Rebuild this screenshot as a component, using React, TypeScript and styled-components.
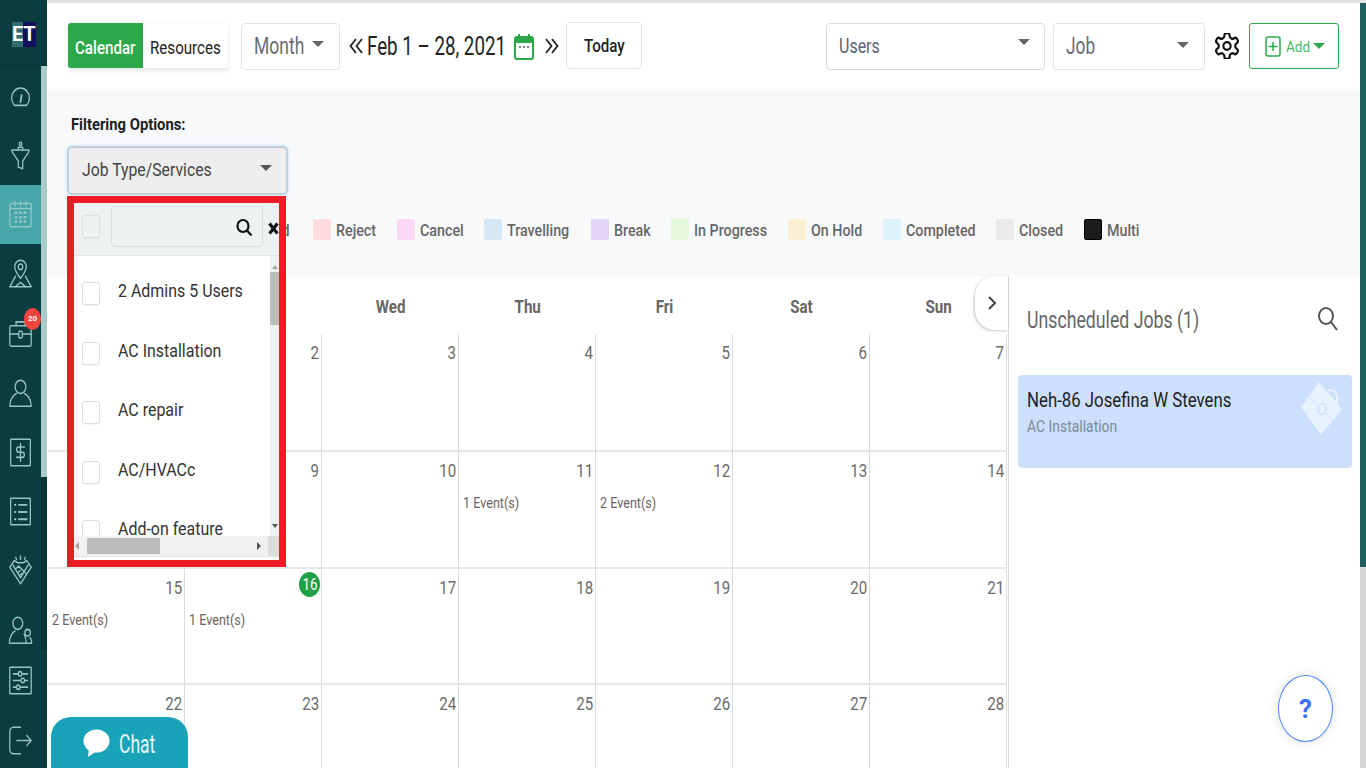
import React from "react";
import styled, { createGlobalStyle } from "styled-components";

const Global = createGlobalStyle`
  html, body { margin: 0; height: 100%; overflow: hidden; background: #fff; }
  * { box-sizing: border-box; }
  body { font-family: Roboto, "Liberation Sans", sans-serif; color: #333; }
`;

/* The reference's type is tall and narrow: every text run is squeezed horizontally. */
const Squeezed = styled.span<{ $w?: number; $s?: number; $c?: string; $b?: number; $x?: number; $o?: string }>`
  display: inline-block;
  width: ${(p) => (p.$w ? `${p.$w}px` : "auto")};
  white-space: nowrap;
  transform: scaleX(${(p) => p.$x ?? 0.84});
  transform-origin: ${(p) => p.$o ?? "left"} center;
  font-size: ${(p) => p.$s ?? 16}px;
  color: ${(p) => p.$c ?? "inherit"};
  font-weight: ${(p) => p.$b ?? 400};
`;

const Shell = styled.div`
  display: flex;
  width: 1366px;
  height: 768px;
  position: relative;
  overflow: hidden;
`;

const Sidebar = styled.aside`
  width: 47px;
  flex: none;
  background: #0b3c40;
  display: flex;
  flex-direction: column;
`;
const LogoBar = styled.div`
  height: 66px;
  flex: none;
  display: flex;
  align-items: center;
  justify-content: center;
  padding-right: 1px;
  border-bottom: 1px solid #083235;
`;
const Logo = styled.div`
  display: flex;
  height: 25px;
  width: 22px;
  margin-top: 3px;
`;
const LogoE = styled.span<{ $bg: string }>`
  flex: 1;
  background: ${(p) => p.$bg};
  color: #fff;
  font-size: 20px;
  font-weight: 700;
  line-height: 25px;
  text-align: center;
  transform-origin: center;
`;
const SideBody = styled.div`
  flex: 1;
  display: flex;
  min-height: 0;
`;
const NavCol = styled.nav`
  width: 41px;
  flex: none;
  display: flex;
  flex-direction: column;
  padding-top: 1px;
`;
const NavItem = styled.div<{ $active?: boolean; $h?: number }>`
  height: ${(p) => p.$h ?? 59}px;
  flex: none;
  display: flex;
  align-items: center;
  justify-content: center;
  color: #93c6c3;
  background: ${(p) => (p.$active ? "#45a5a8" : "transparent")};
  position: relative;
`;
const Badge = styled.span`
  position: absolute;
  top: 5px;
  right: 0;
  width: 17px;
  height: 22px;
  border-radius: 50%;
  background: #f2443a;
  color: #fff;
  font-size: 8px;
  font-weight: 700;
  line-height: 22px;
  text-align: center;
`;
const SideTrack = styled.div`
  width: 6px;
  flex: none;
  display: flex;
  flex-direction: column;
  background: #093437;
`;
const SideThumb = styled.div`
  height: 411px;
  background: #abcaca;
`;
const SideTrackEnd = styled.div`
  flex: 1;
  margin-top: 173px;
  background: #0b3c40;
`;

const RightArea = styled.div`
  flex: 1;
  min-width: 0;
  display: flex;
  border-top: 3px solid #e3e3e6;
`;
const Main = styled.main`
  flex: 1;
  min-width: 0;
  display: flex;
  flex-direction: column;
  position: relative;
`;
const PageTrack = styled.div`
  width: 6px;
  flex: none;
  background: #d6d6d6;
`;
const PageThumb = styled.div`
  height: 564px;
  background: #1f5f60;
`;

const Topbar = styled.header`
  height: 86px;
  flex: none;
  display: flex;
  align-items: center;
  padding: 0 21px;
`;
const Tabs = styled.div`
  display: flex;
  height: 45px;
  margin-top: -1px;
  border-radius: 3px;
  box-shadow: 0 2px 5px rgba(0, 0, 0, 0.12);
`;
const Tab = styled.div<{ $on?: boolean }>`
  display: flex;
  align-items: center;
  width: ${(p) => (p.$on ? 75 : 85)}px;
  padding: 3px 0 0 ${(p) => (p.$on ? 7 : 7)}px;
  background: ${(p) => (p.$on ? "#2aa84a" : "#fff")};
  color: ${(p) => (p.$on ? "#fff" : "#222")};
  border-radius: ${(p) => (p.$on ? "3px 0 0 3px" : "0 3px 3px 0")};
`;
const SelectBox = styled.div<{ $w: number; $ml: number; $blue?: boolean; $pad?: number }>`
  width: ${(p) => p.$w}px;
  height: 47px;
  margin-left: ${(p) => p.$ml}px;
  flex: none;
  display: flex;
  align-items: center;
  justify-content: space-between;
  padding: 0 ${(p) => p.$pad ?? 15}px 0 12px;
  background: #fff;
  border: 1px solid ${(p) => (p.$blue ? "#d9dbe2" : "#e4e4e4")};
  border-radius: 4px;
`;
const Caret = styled.i<{ $c?: string; $up?: number; $w?: number }>`
  display: block;
  width: 0;
  height: 0;
  border-left: ${(p) => p.$w ?? 6}px solid transparent;
  border-right: ${(p) => p.$w ?? 6}px solid transparent;
  border-top: ${(p) => p.$w ?? 6}px solid ${(p) => p.$c ?? "#666"};
  margin-top: ${(p) => -(p.$up ?? 0)}px;
`;
const DateNav = styled.div`
  display: flex;
  align-items: center;
  margin-left: 9px;
  color: #222;
  height: 47px;
`;
const Arrows = styled.span<{ $ml?: number }>`
  display: flex;
  margin-left: ${(p) => p.$ml ?? 0}px;
  color: #222;
`;
const DateText = styled.span`
  margin-left: 4px;
  width: 147px;
`;
const TodayBtn = styled.div`
  margin-left: 7px;
  width: 76px;
  height: 47px;
  margin-top: -2px;
  display: flex;
  align-items: center;
  padding-left: 17px;
  border: 1px solid #e4e4e4;
  border-radius: 4px;
  background: #fff;
`;
const Spacer = styled.div`
  flex: 1;
`;
const GearWrap = styled.span`
  display: flex;
  margin-left: 10px;
  color: #111;
`;
const AddBtn = styled.div`
  width: 90px;
  height: 46px;
  margin-left: 10px;
  display: flex;
  align-items: center;
  padding-left: 15px;
  gap: 5px;
  border: 1px solid #2aa84a;
  border-radius: 3px;
  color: #2aa84a;
`;
const AddLabel = styled.span`
  width: 22px;
`;

const FilterPanel = styled.section`
  height: 187px;
  flex: none;
  background: #f8f9fb;
  padding: 25px 0 0 21px;
  position: relative;
`;
const FilterTitle = styled.div`
  padding-left: 3px;
  height: 20px;
  line-height: 20px;
`;
const FilterSelectWrap = styled.div`
  position: relative;
  width: 219px;
  margin-top: 13px;
`;
const FilterSelect = styled.div`
  height: 47px;
  display: flex;
  align-items: center;
  justify-content: space-between;
  padding: 0 14px 6px 13px;
  background: #eeeeee;
  border: 1px solid #c8ccd0;
  border-radius: 4px;
  box-shadow: 0 0 0 1px #b5d5ef, 0 0 4px #9ec9ec;
`;
const FilterSelectLabel = styled.span`
  margin-top: 4px;
`;
const Menu = styled.div`
  position: absolute;
  z-index: 5;
  top: 49px;
  left: -1px;
  width: 219px;
  height: 371px;
  border: 7px solid #ed1c24;
  background: #fff;
  display: flex;
  flex-direction: column;
`;
const MenuHead = styled.div`
  height: 53px;
  flex: none;
  background: #eef1f2;
  border-bottom: 1px solid #e2e4e4;
  display: flex;
  align-items: flex-start;
  padding: 3px 0 0 8px;
`;
const Check = styled.span<{ $grey?: boolean }>`
  display: block;
  flex: none;
  width: 18px;
  height: 23px;
  border: 1px solid #dcdfe0;
  border-radius: 3px;
  background: ${(p) => (p.$grey ? "#eef1f2" : "#fff")};
  box-shadow: 0 1px 1px rgba(0, 0, 0, 0.04);
`;
const HeadCheck = styled(Check)`
  margin-top: 9px;
`;
const SearchField = styled.div`
  width: 152px;
  height: 41px;
  margin-left: 11px;
  flex: none;
  display: flex;
  align-items: center;
  justify-content: flex-end;
  padding: 2px 9px 0 0;
  border: 1px solid #d9dddf;
  border-radius: 4px;
  color: #111;
`;
const ClearX = styled.span`
  display: flex;
  margin: 16px 0 0 5px;
  color: #111;
`;
const MenuBody = styled.div`
  height: 280px;
  flex: none;
  display: flex;
  min-height: 0;
`;
const OptList = styled.div`
  flex: 1;
  overflow: hidden;
  padding-top: 26px;
  display: flex;
  flex-direction: column;
`;
const Opt = styled.div`
  height: 59.5px;
  flex: none;
  display: flex;
  align-items: flex-start;
  padding-left: 8px;
`;
const OptLabel = styled.span`
  margin-left: 18px;
  margin-top: -3px;
`;
const VBar = styled.div`
  width: 9px;
  flex: none;
  background: #f1f1f1;
  display: flex;
  flex-direction: column;
  align-items: center;
  justify-content: space-between;
  padding: 9px 0 8px;
`;
const VThumb = styled.div`
  width: 9px;
  height: 53px;
  background: #bcbcbc;
  margin-top: 3px;
  margin-bottom: auto;
`;
const TriUp = styled.i`
  display: block;
  width: 0;
  height: 0;
  border-left: 3px solid transparent;
  border-right: 3px solid transparent;
  border-bottom: 4px solid #a3a3a3;
`;
const TriDown = styled.i`
  display: block;
  width: 0;
  height: 0;
  border-left: 3px solid transparent;
  border-right: 3px solid transparent;
  border-top: 4px solid #555;
`;
const HBar = styled.div`
  height: 21px;
  flex: none;
  background: #f1f1f1;
  display: flex;
  align-items: center;
  padding-left: 1px;
  border-bottom: 1px solid #e2e2e2;
`;
const HThumb = styled.div`
  width: 73px;
  height: 16px;
  background: #bcbcbc;
  margin-left: 8px;
`;
const TriLeft = styled.i`
  display: block;
  width: 0;
  height: 0;
  border-top: 4px solid transparent;
  border-bottom: 4px solid transparent;
  border-right: 4px solid #a3a3a3;
`;
const TriRight = styled.i`
  display: block;
  width: 0;
  height: 0;
  margin-left: 97px;
  border-top: 4px solid transparent;
  border-bottom: 4px solid transparent;
  border-left: 4px solid #555;
`;
const HCorner = styled.div`
  width: 11px;
  height: 20px;
  margin-left: auto;
  background: #dcdcdc;
`;

const Legend = styled.div`
  position: absolute;
  left: 160px;
  top: 130px;
  display: flex;
  align-items: center;
  height: 21px;
`;
const LegendItem = styled.div<{ $w: number }>`
  display: flex;
  align-items: center;
  width: ${(p) => p.$w}px;
  flex: none;
`;
const Swatch = styled.span<{ $c: string; $dark?: boolean }>`
  width: 18px;
  height: 21px;
  flex: none;
  border-radius: 2px;
  background: ${(p) => p.$c};
  margin-right: 5px;
  border: ${(p) => (p.$dark ? "1px solid #000" : "none")};
`;

const Lower = styled.div`
  flex: 1;
  display: flex;
  min-height: 0;
`;
const CalendarPane = styled.div`
  width: 961px;
  flex: none;
  position: relative;
  padding-left: 1px;
`;
const DayHead = styled.div`
  height: 58px;
  display: grid;
  grid-template-columns: repeat(7, 137px);
  align-items: center;
  padding-top: 2px;
`;
const DayName = styled.div`
  display: flex;
  justify-content: center;
  color: #666;
`;
const Grid = styled.div`
  display: grid;
  grid-template-columns: repeat(7, 137px);
  grid-template-rows: 118px repeat(3, 116.5px);
`;
const Cell = styled.div`
  position: relative;
  border-right: 1px solid #dcdcdc;
  border-bottom: 2px solid #e6e6e6;
  padding: 8px 2px 0 4px;
  display: flex;
  flex-direction: column;
`;
const CellNum = styled.div`
  display: flex;
  justify-content: flex-end;
  height: 22px;
`;
const NumText = styled.span`
  font-size: 18px;
  line-height: 22px;
  color: #6b6b6b;
  display: inline-block;
  transform: scaleX(0.84);
  transform-origin: right center;
`;
const TodayDot = styled.span`
  position: absolute;
  top: 3px;
  right: 1px;
  width: 21px;
  height: 25px;
  border-radius: 50%;
  background: #1f9f46;
  color: #fff;
  font-size: 16px;
  line-height: 25px;
  text-align: center;
`;
const TodayNum = styled.span`
  display: inline-block;
  transform: scaleX(0.84);
`;
const EventText = styled.div`
  margin-top: 13px;
  height: 16px;
  line-height: 16px;
`;
const Toggle = styled.div`
  position: absolute;
  top: 0;
  right: 0;
  width: 33px;
  height: 54px;
  background: #fff;
  border-radius: 20px 0 0 20px;
  box-shadow: -1px 1px 3px rgba(0, 0, 0, 0.22);
  display: flex;
  align-items: center;
  justify-content: center;
  color: #444;
`;

const SidePanel = styled.aside`
  flex: 1;
  min-width: 0;
  border-left: 1px solid #dcdcdc;
  padding: 0 8px 0 9px;
`;
const SideHead = styled.div`
  height: 99px;
  display: flex;
  align-items: flex-start;
  justify-content: space-between;
  padding: 31px 14px 0 9px;
  color: #666;
`;
const JobCard = styled.div`
  height: 93px;
  background: #cce0fd;
  border-radius: 4px;
  padding: 13px 9px;
  position: relative;
`;
const JobTitle = styled.div`
  height: 24px;
  line-height: 24px;
`;
const JobSub = styled.div`
  height: 22px;
  line-height: 22px;
  margin-top: 4px;
`;
const JobIcon = styled.span`
  position: absolute;
  right: 9px;
  top: 7px;
  display: flex;
`;

const ChatBtn = styled.div`
  position: absolute;
  left: 51px;
  bottom: 0;
  width: 137px;
  height: 51px;
  z-index: 6;
  background: #19a3b8;
  border-radius: 20px 20px 0 0;
  display: flex;
  align-items: center;
  padding-left: 32px;
  gap: 9px;
  color: #fff;
`;
const ChatLabel = styled.span`
  margin-top: 4px;
`;
const HelpBtn = styled.div`
  position: absolute;
  left: 1278px;
  top: 675px;
  width: 55px;
  height: 67px;
  z-index: 6;
  border-radius: 50%;
  border: 1px solid #4a86f7;
  background: #fff;
  box-shadow: 0 0 12px rgba(0, 0, 0, 0.12);
  display: flex;
  align-items: center;
  justify-content: center;
  color: #3f6ff0;
  font-size: 26px;
  font-weight: 700;
`;

const Ico: React.FC<{ children: React.ReactNode; w?: number }> = ({ children, w = 1.4 }) => (
  <svg width={25} height={31} viewBox="0 0 28 28" preserveAspectRatio="none" fill="none" stroke="currentColor" strokeWidth={w} strokeLinecap="round" strokeLinejoin="round">
    {children}
  </svg>
);

const navIcons: { node: React.ReactNode; active?: boolean; h?: number; badge?: string }[] = [
  { node: <Ico><path d="M7.2 22a10 9 0 1 1 13.600 0Z" /><path d="M14 19l1.200-6" strokeWidth="2" /></Ico> },
  { node: <Ico><circle cx="14" cy="3.500" r="1.500" /><path d="M11.500 9V6.500h5V9" /><path d="M4.500 9h19v1.500L16.500 19v7l-5-1.500V19l-7-8.500Z" /></Ico> },
  { active: true, node: <Ico><rect x="2" y="4" width="24" height="21" rx="1.500" /><path d="M2 8.500h24M8 2v4M14 2v4M20 2v4" /><path d="M7.500 12.500h3M12.500 12.500h3M17.500 12.500h3M7.500 16.500h3M12.500 16.500h3M17.500 16.500h3M7.500 20.500h3M12.500 20.500h3M17.500 20.500h3" strokeWidth="2.200" strokeLinecap="butt" /></Ico> },
  { node: <Ico><path d="M14 18.500c-4-4.500-6.500-7-6.500-10.500a6.500 6 0 0 1 13 0c0 3.500-2.500 6-6.500 10.500Z" /><circle cx="14" cy="8" r="2.500" /><path d="M8.500 16.500 2 26h24l-6.500-9.500" /><path d="M8 26l6-4 6 4" /></Ico> },
  { h: 61, badge: "20", node: <Ico><rect x="2" y="7" width="24" height="18.500" rx="1.500" /><path d="M9 7V3.500h10V7M2 14.500h10M16 14.500h10" /><rect x="12" y="12" width="4" height="6" rx="1.200" /></Ico> },
  { node: <Ico><circle cx="14" cy="8" r="6" /><path d="M2 25.500c0-6.500 4.500-10.500 7.500-11.500M26 25.500c0-6.500-4.500-10.500-7.500-11.500M2 25.500h24" /></Ico> },
  { node: <Ico><rect x="3" y="2" width="22" height="24" rx="0.500" /><path d="M18.500 9H12a2.300 2.300 0 0 0 0 4.700h4a2.300 2.300 0 0 1 0 4.700H9.500M14 6v16" /></Ico> },
  { node: <Ico><rect x="3" y="2" width="22" height="24" rx="0.500" /><path d="M7.500 8h1M12 8h9M7.500 14.500h1M12 14.500h9M7.500 21h1M12 21h9" strokeWidth="1.700" /></Ico> },
  { node: <Ico><path d="M7 5 2 11l12 15 12-15-5-6-4 2h-6Z" /><path d="M5.500 9 14 20.500 22.500 9" /><path d="M8 13l4-3 3 2.500 5 4M11 16l2.500-2M13 18.500l2.500-2M14 4V1M9.500 4 8.500 2M18.500 4l1-2" /></Ico> },
  { h: 60, node: <Ico><circle cx="11" cy="7.500" r="5.500" /><path d="M1.500 25.500c0-6 3.500-10 6.500-11M20.500 25.500c0-3-1-6-2.500-8.500M1.500 25.500H26" /><circle cx="22" cy="16" r="3" /><path d="M26.500 25.500c0-2-.5-4-2-5" /></Ico> },
  { h: 41, node: <Ico><rect x="2" y="2" width="24" height="24" rx="0.500" /><path d="M6 8h5M16 8h6M6 14h8M19 14h3M6 20h3M14 20h8" /><circle cx="13.500" cy="8" r="2" /><circle cx="16.500" cy="14" r="2" /><circle cx="11.500" cy="20" r="2" /></Ico> },
  { h: 78, node: <Ico><path d="M14 2H6a4 4 0 0 0-4 4v16a4 4 0 0 0 4 4h8" /><path d="M10 14h16M21 9.500l5 4.500-5 4.500" /></Ico> },
];

const legend: { name: string; c: string; w: number; dark?: boolean }[] = [
  { name: "Assigned", c: "#dcebd0", w: 106 },
  { name: "Reject", c: "#ffdcde", w: 84 },
  { name: "Cancel", c: "#fad7f5", w: 87 },
  { name: "Travelling", c: "#d6e7f6", w: 107 },
  { name: "Break", c: "#e4d5f7", w: 80 },
  { name: "In Progress", c: "#e6f8d8", w: 117 },
  { name: "On Hold", c: "#fcf0d4", w: 95 },
  { name: "Completed", c: "#dcf2fb", w: 113 },
  { name: "Closed", c: "#ebebeb", w: 88 },
  { name: "Multi", c: "#1c1c1c", w: 70, dark: true },
];

const options = ["2 Admins 5 Users", "AC Installation", "AC repair", "AC/HVACc", "Add-on feature"];
const events: Record<number, string> = { 11: "1 Event(s)", 12: "2 Event(s)", 15: "2 Event(s)", 16: "1 Event(s)" };
const days = ["Mon", "Tue", "Wed", "Thu", "Fri", "Sat", "Sun"];

export default function App() {
  return (
    <Shell>
      <Global />
      <Sidebar>
        <LogoBar>
          <Logo>
            <LogoE $bg="#2f6d6f">E</LogoE>
            <LogoE $bg="#10105e">T</LogoE>
          </Logo>
        </LogoBar>
        <SideBody>
          <NavCol>
            {navIcons.map((n, i) => (
              <NavItem key={i} $active={n.active} $h={n.h}>
                {n.node}
                {n.badge && <Badge>{n.badge}</Badge>}
              </NavItem>
            ))}
          </NavCol>
          <SideTrack>
            <SideThumb />
            <SideTrackEnd />
          </SideTrack>
        </SideBody>
      </Sidebar>

      <RightArea>
        <Main>
          <Topbar>
            <Tabs>
              <Tab $on><Squeezed $s={18} $b={500}>Calendar</Squeezed></Tab>
              <Tab><Squeezed $s={18}>Resources</Squeezed></Tab>
            </Tabs>
            <SelectBox $w={99} $ml={13}>
              <Squeezed $w={52} $s={24} $c="#6b6b73" $x={0.73}>Month</Squeezed>
              <Caret $up={4} />
            </SelectBox>
            <DateNav>
              <Arrows>
                <svg width="14" height="18" viewBox="0 0 14 18" fill="none" stroke="#222" strokeWidth="1.800"><path d="M7 2 1.500 9 7 16M13 2 7.500 9 13 16" /></svg>
              </Arrows>
              <DateText><Squeezed $s={25} $c="#222" $x={0.75}>Feb 1 – 28, 2021</Squeezed></DateText>
              <svg width="20" height="27" viewBox="0 0 20 27" fill="none">
                <rect x="1" y="4" width="18" height="22" rx="2" fill="#fff" stroke="#2aa84a" strokeWidth="2" />
                <rect x="1" y="4" width="18" height="6" fill="#2aa84a" />
                <path d="M5 1v4M15 1v4" stroke="#2aa84a" strokeWidth="2" />
                <path d="M5 14h2M9 14h2M13 14h2" stroke="#888" strokeWidth="2" />
              </svg>
              <Arrows $ml={11}>
                <svg width="14" height="18" viewBox="0 0 14 18" fill="none" stroke="#222" strokeWidth="1.800"><path d="M1 2 6.500 9 1 16M7 2 12.500 9 7 16" /></svg>
              </Arrows>
            </DateNav>
            <TodayBtn><Squeezed $s={18} $b={500} $c="#222">Today</Squeezed></TodayBtn>
            <Spacer />
            <SelectBox $w={219} $ml={0} $blue $pad={14}>
              <Squeezed $w={55} $s={20} $c="#5b6270" $x={0.8}>Users</Squeezed>
              <Caret $up={8} />
            </SelectBox>
            <SelectBox $w={152} $ml={8}>
              <Squeezed $w={30} $s={24} $c="#6b6b73" $x={0.72}>Job</Squeezed>
              <Caret $up={2} />
            </SelectBox>
            <GearWrap>
              <svg width="24" height="26" viewBox="2 2 20 20" fill="none" stroke="currentColor" strokeWidth="1.800" strokeLinecap="round" strokeLinejoin="round" preserveAspectRatio="none">
                <path d="M12.220 2h-.44a2 2 0 0 0-2 2v.18a2 2 0 0 1-1 1.730l-.43.250a2 2 0 0 1-2 0l-.15-.080a2 2 0 0 0-2.730.730l-.220.380a2 2 0 0 0 .730 2.730l.150.100a2 2 0 0 1 1 1.720v.510a2 2 0 0 1-1 1.740l-.150.090a2 2 0 0 0-.730 2.730l.220.380a2 2 0 0 0 2.730.730l.150-.080a2 2 0 0 1 2 0l.430.250a2 2 0 0 1 1 1.730V20a2 2 0 0 0 2 2h.440a2 2 0 0 0 2-2v-.180a2 2 0 0 1 1-1.730l.430-.250a2 2 0 0 1 2 0l.150.080a2 2 0 0 0 2.730-.730l.220-.390a2 2 0 0 0-.730-2.730l-.150-.080a2 2 0 0 1-1-1.740v-.500a2 2 0 0 1 1-1.740l.150-.090a2 2 0 0 0 .730-2.730l-.220-.380a2 2 0 0 0-2.730-.730l-.150.080a2 2 0 0 1-2 0l-.430-.250a2 2 0 0 1-1-1.730V4a2 2 0 0 0-2-2z" />
                <circle cx="12" cy="12" r="3" />
              </svg>
            </GearWrap>
            <AddBtn>
              <svg width="16" height="21" viewBox="0 0 16 21" fill="none" stroke="#2aa84a" strokeWidth="1.500"><rect x="1" y="1" width="14" height="19" rx="2" /><path d="M8 6v9M3.500 10.500h9" /></svg>
              <AddLabel><Squeezed $s={15} $c="#4cb868" $x={0.9}>Add</Squeezed></AddLabel>
              <Caret $c="#2aa84a" $w={6} />
            </AddBtn>
          </Topbar>

          <FilterPanel>
            <FilterTitle><Squeezed $s={17} $b={700} $c="#222" $x={0.87}>Filtering Options:</Squeezed></FilterTitle>
            <FilterSelectWrap>
              <FilterSelect>
                <FilterSelectLabel><Squeezed $s={19} $c="#444" $x={0.83}>Job Type/Services</Squeezed></FilterSelectLabel>
                <Caret $c="#555" />
              </FilterSelect>
              <Menu>
                <MenuHead>
                  <HeadCheck $grey />
                  <SearchField>
                    <svg width="17" height="19" viewBox="0 0 17 19" fill="none" stroke="currentColor" strokeWidth="2.200"><ellipse cx="7" cy="8" rx="5.500" ry="6" /><path d="M11 12.500 15.500 17.500" /></svg>
                  </SearchField>
                  <ClearX>
                    <svg width="11" height="13" viewBox="0 0 11 13" fill="none" stroke="currentColor" strokeWidth="3.200"><path d="M1.500 1.500 9.500 11.500M9.500 1.500 1.500 11.500" /></svg>
                  </ClearX>
                </MenuHead>
                <MenuBody>
                  <OptList>
                    {options.map((o) => (
                      <Opt key={o}>
                        <Check />
                        <OptLabel><Squeezed $s={19} $c="#333">{o}</Squeezed></OptLabel>
                      </Opt>
                    ))}
                  </OptList>
                  <VBar>
                    <TriUp />
                    <VThumb />
                    <TriDown />
                  </VBar>
                </MenuBody>
                <HBar>
                  <TriLeft />
                  <HThumb />
                  <TriRight />
                  <HCorner />
                </HBar>
              </Menu>
            </FilterSelectWrap>
            <Legend>
              {legend.map((l) => (
                <LegendItem key={l.name} $w={l.w}>
                  <Swatch $c={l.c} $dark={l.dark} />
                  <Squeezed $s={17} $b={500} $c="#666">{l.name}</Squeezed>
                </LegendItem>
              ))}
            </Legend>
          </FilterPanel>

          <Lower>
            <CalendarPane>
              <DayHead>
                {days.map((d) => (
                  <DayName key={d}><Squeezed $s={18} $b={700} $o="center">{d}</Squeezed></DayName>
                ))}
              </DayHead>
              <Grid>
                {Array.from({ length: 28 }, (_, i) => i + 1).map((n) => (
                  <Cell key={n}>
                    <CellNum>
                      {n === 16 ? <TodayDot><TodayNum>16</TodayNum></TodayDot> : <NumText>{n}</NumText>}
                    </CellNum>
                    {events[n] && (
                      <EventText><Squeezed $s={15} $c="#6e6262">{events[n]}</Squeezed></EventText>
                    )}
                  </Cell>
                ))}
              </Grid>
              <Toggle>
                <svg width="10" height="16" viewBox="0 0 10 16" fill="none" stroke="currentColor" strokeWidth="2"><path d="M2 2l6 6-6 6" /></svg>
              </Toggle>
            </CalendarPane>
            <SidePanel>
              <SideHead>
                <Squeezed $s={23} $x={0.77}>Unscheduled Jobs (1)</Squeezed>
                <svg width="20" height="24" viewBox="0 0 20 24" fill="none" stroke="#555" strokeWidth="2"><ellipse cx="8" cy="9" rx="7" ry="8" /><path d="M13 15l6 8" /></svg>
              </SideHead>
              <JobCard>
                <JobTitle><Squeezed $s={21} $c="#222" $x={0.8}>Neh-86 Josefina W Stevens</Squeezed></JobTitle>
                <JobSub><Squeezed $s={16} $c="#7a8a9a" $x={0.87}>AC Installation</Squeezed></JobSub>
                <JobIcon>
                  <svg width="42" height="54" viewBox="0 0 42 54" fill="#fff" fillOpacity="0.55">
                    <path d="M18 0 41 27 20 53 0 25Z" />
                    <path d="M27 9c5-3 12 3 8 12" fill="none" stroke="#fff" strokeOpacity="0.55" strokeWidth="2" />
                    <ellipse cx="21" cy="27" rx="4" ry="5" fill="none" stroke="#cce0fd" strokeWidth="1.500" />
                    <path d="M8 14 17 24M25 31 34 41" stroke="#cce0fd" strokeWidth="1" />
                  </svg>
                </JobIcon>
              </JobCard>
            </SidePanel>
          </Lower>
        </Main>
        <PageTrack><PageThumb /></PageTrack>
      </RightArea>

      <ChatBtn>
        <svg width="27" height="28" viewBox="0 0 27 28" fill="#fff"><ellipse cx="13.500" cy="12" rx="13" ry="11.500" /><path d="M6 19 5 28l10-7Z" /></svg>
        <ChatLabel><Squeezed $s={25} $c="#e4f6f8" $x={0.7}>Chat</Squeezed></ChatLabel>
      </ChatBtn>
      <HelpBtn>?</HelpBtn>
    </Shell>
  );
}
